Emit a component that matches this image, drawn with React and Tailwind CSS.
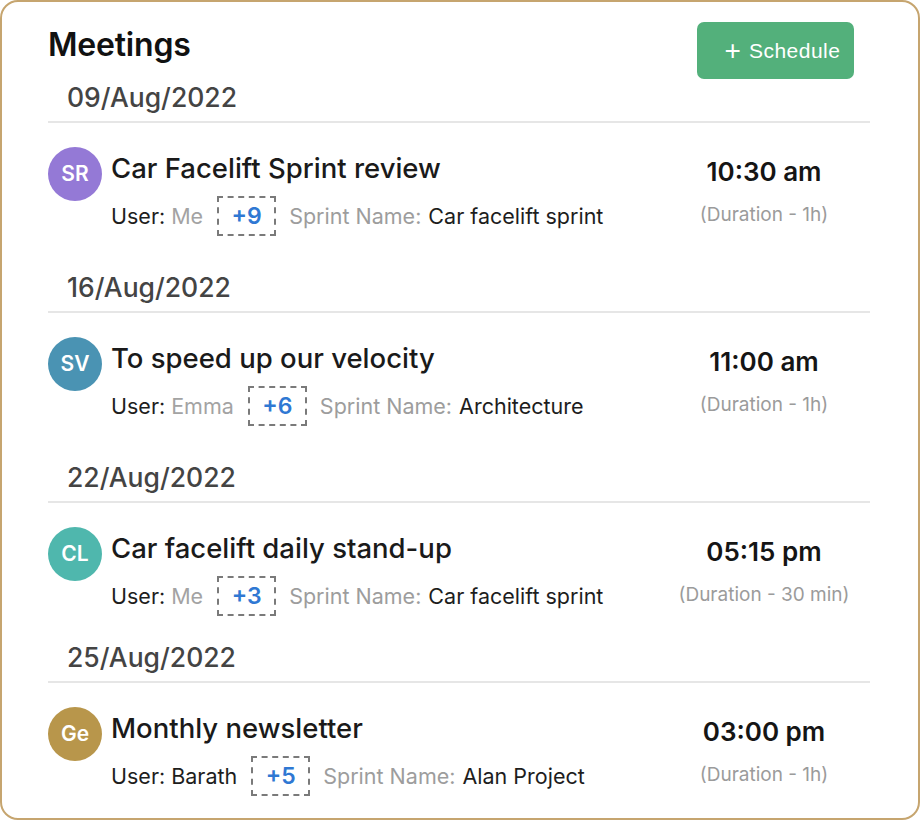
import React from "react";

const sections = [
  {
    date: "09/Aug/2022",
    initials: "SR",
    color: "bg-[#9479d6]",
    title: "Car Facelift Sprint review",
    user: "Me",
    userGray: true,
    more: "+9",
    sprint: "Car facelift sprint",
    time: "10:30 am",
    duration: "(Duration - 1h)",
    gap: "pb-[29px]",
  },
  {
    date: "16/Aug/2022",
    initials: "SV",
    color: "bg-[#4a93b3]",
    title: "To speed up our velocity",
    user: "Emma",
    userGray: true,
    more: "+6",
    sprint: "Architecture",
    time: "11:00 am",
    duration: "(Duration - 1h)",
    gap: "pb-[29px]",
  },
  {
    date: "22/Aug/2022",
    initials: "CL",
    color: "bg-[#4fb7ad]",
    title: "Car facelift daily stand-up",
    user: "Me",
    userGray: true,
    more: "+3",
    sprint: "Car facelift sprint",
    time: "05:15 pm",
    duration: "(Duration - 30 min)",
    gap: "pb-[19px]",
  },
  {
    date: "25/Aug/2022",
    initials: "Ge",
    color: "bg-[#b8964b]",
    title: "Monthly newsletter",
    user: "Barath",
    userGray: false,
    more: "+5",
    sprint: "Alan Project",
    time: "03:00 pm",
    duration: "(Duration - 1h)",
    gap: "pb-[19px]",
  },
];

export default function App() {
  return (
    <div className="w-[920px] h-[820px] bg-white font-['Inter',sans-serif] text-[#1d1d1d]">
      <div className="w-[920px] h-[820px] border-2 border-[#c6a56f] rounded-[18px] pl-[46px] pr-[48px] flex flex-col overflow-hidden">
        <div className="h-[73px] shrink-0 flex justify-between items-start">
          <div className="mt-[24px] text-[32px] leading-[38px] font-semibold text-[#111] tracking-[-0.2px]">
            Meetings
          </div>
          <button className="mt-[20px] mr-[16px] w-[157px] h-[57px] rounded-[7px] bg-[#53b07b] text-white text-[21px] flex items-center justify-center pl-[14px] gap-[8px] font-['Comic_Sans_MS','Liberation_Sans',cursive]">
            <span className="text-[28px] leading-none font-light">+</span>
            <span className="tracking-[0.5px]">Schedule</span>
          </button>
        </div>
        {sections.map((s) => (
          <div key={s.date} className={`flex flex-col ${s.gap}`}>
            <div className="h-[48px] flex items-center pl-[19px] border-b-2 border-[#e6e6e6] text-[26.5px] font-medium text-[#444]">
              {s.date}
            </div>
            <div className="flex items-start">
              <div
                className={`mt-[24px] w-[54px] h-[54px] rounded-full ${s.color} text-white text-[21px] font-semibold flex items-center justify-center shrink-0`}
              >
                {s.initials}
              </div>
              <div className="ml-[9px] flex-1 flex flex-col">
                <div className="mt-[29px] text-[27.5px] leading-[32px] font-medium text-[#1a1a1a]">
                  {s.title}
                </div>
                <div className="mt-[12px] flex items-center text-[21.5px] leading-[26px]">
                  <span className="text-[#1d1d1d]">User:</span>
                  <span className={`ml-[6px] ${s.userGray ? "text-[#a3a3a3]" : "text-[#1d1d1d]"}`}>
                    {s.user}
                  </span>
                  <span className="ml-[14px] w-[59px] h-[40px] border-2 border-dashed border-[#7a7a7a] flex items-center justify-center text-[#2f78d3] text-[23px] font-semibold">
                    {s.more}
                  </span>
                  <span className="ml-[13px] text-[#9d9d9d]">Sprint Name:</span>
                  <span className="ml-[7px] text-[#1d1d1d]">{s.sprint}</span>
                </div>
              </div>
              <div className="w-[212px] shrink-0 flex flex-col items-center">
                <div className="mt-[34px] text-[26px] leading-[30px] font-semibold text-[#151515]">
                  {s.time}
                </div>
                <div className="mt-[17px] text-[19px] leading-[22px] text-[#9b9b9b]">
                  {s.duration}
                </div>
              </div>
            </div>
          </div>
        ))}
      </div>
    </div>
  );
}
